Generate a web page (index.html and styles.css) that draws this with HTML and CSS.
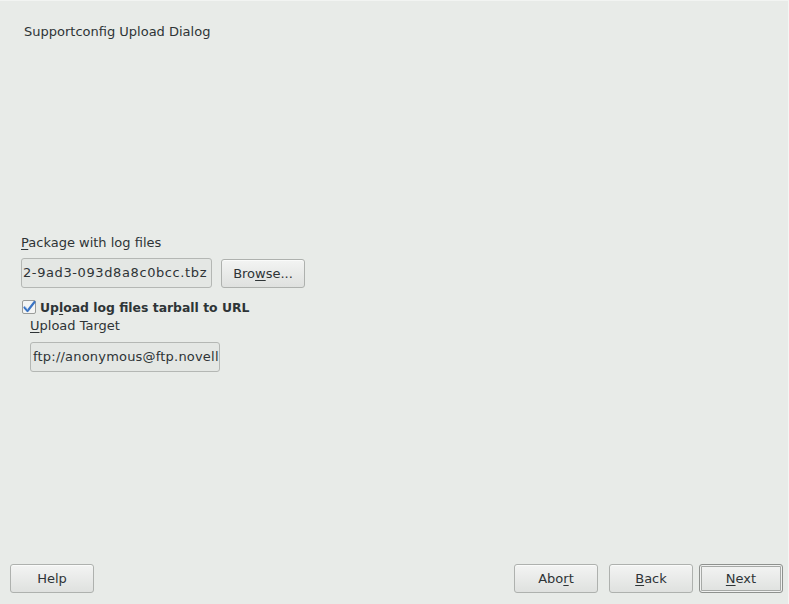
FILE: index.html
```html
<!DOCTYPE html>
<html>
<head>
<meta charset="utf-8">
<link rel="stylesheet" href="styles.css">
</head>
<body>
<div class="window">
  <div class="title">Supportconfig Upload Dialog</div>
  <div class="content">
    <div class="label"><u>P</u>ackage with log files</div>
    <div class="row">
      <div class="field field-pkg">2-9ad3-093d8a8c0bcc.tbz</div>
      <div class="btn btn-browse">Bro<u>w</u>se...</div>
    </div>
    <div class="check-row">
      <span class="checkbox">
        <svg width="14" height="14" viewBox="0 0 14 14">
          <rect x="0.5" y="0.5" width="13" height="13" rx="1.5" fill="#f4f5f4" stroke="#9a9c9a"/>
          <path d="M2.5 7.5 L5.5 11 L12.5 2" fill="none" stroke="#3a74c4" stroke-width="2.2" stroke-linecap="round" stroke-linejoin="round"/>
          <path d="M3.5 7.2 L5.4 9.4" fill="none" stroke="#9cc0ee" stroke-width="0.8" stroke-linecap="round"/>
        </svg>
      </span>
      <span class="check-label">Up<u>l</u>oad log files tarball to URL</span>
    </div>
    <div class="sub">
      <div class="label"><u>U</u>pload Target</div>
      <div class="field field-url">ftp://anonymous@ftp.novell</div>
    </div>
  </div>
  <div class="footer">
    <div class="btn">Help</div>
    <div class="spacer"></div>
    <div class="btn">Abo<u>r</u>t</div>
    <div class="btn btn-back"><u>B</u>ack</div>
    <div class="btn btn-default"><u>N</u>ext</div>
  </div>
</div>
</body>
</html>
```

FILE: styles.css
```css
html, body {
  margin: 0;
  padding: 0;
}
body {
  background: #e8ebe8;
  font-family: "DejaVu Sans", sans-serif;
  font-size: 13px;
  color: #2e3436;
}
.window {
  width: 789px;
  height: 604px;
  box-sizing: border-box;
  display: flex;
  flex-direction: column;
  border-top: 1px solid #f2f4f2;
  border-right: 1px solid #f4f6f4;
}
u {
  text-decoration: underline;
  text-underline-offset: 2px;
}
.title {
  padding: 22px 0 0 24px;
  height: 20px;
  line-height: 18px;
}
.content {
  flex: 1;
  padding: 192px 0 0 21px;
}
.label {
  line-height: 16px;
  height: 16px;
}
.row {
  display: flex;
  align-items: flex-start;
  margin-top: 7px;
}
.field {
  box-sizing: border-box;
  height: 30px;
  line-height: 28px;
  border: 1px solid #b4b7b4;
  border-radius: 3px;
  background: #e4e7e4;
  white-space: nowrap;
  overflow: hidden;
}
.field-pkg {
  width: 191px;
  padding-left: 1px;
  letter-spacing: 0.6px;
}
.field-url {
  width: 190px;
  padding-left: 2px;
  margin-top: 8px;
  letter-spacing: 0.2px;
}
.btn {
  box-sizing: border-box;
  width: 84px;
  height: 29px;
  line-height: 27px;
  text-align: center;
  border: 1px solid #aeb1ae;
  border-radius: 3px;
  background: linear-gradient(#f3f4f3, #dfe1df);
  box-shadow: inset 0 1px 0 #fafbfa;
}
.btn-browse {
  margin-left: 9px;
  margin-top: 1px;
}
.check-row {
  display: flex;
  align-items: center;
  margin-top: 11px;
  height: 16px;
  padding-left: 1px;
}
.checkbox {
  width: 14px;
  height: 14px;
  display: flex;
}
.check-label {
  font-weight: bold;
  font-size: 12.4px;
  margin-left: 4px;
}
.sub {
  padding-left: 9px;
  margin-top: 3px;
}
.footer {
  display: flex;
  padding: 0 5px 11px 10px;
  align-items: flex-end;
}
.spacer {
  flex: 1;
}
.btn-back {
  margin-left: 11px;
}
.btn-default {
  margin-left: 6px;
  border-color: #8e918e;
  box-shadow: inset 0 0 0 1px #f0f1f0, inset 0 0 0 2px #a6a9a6;
}
```
